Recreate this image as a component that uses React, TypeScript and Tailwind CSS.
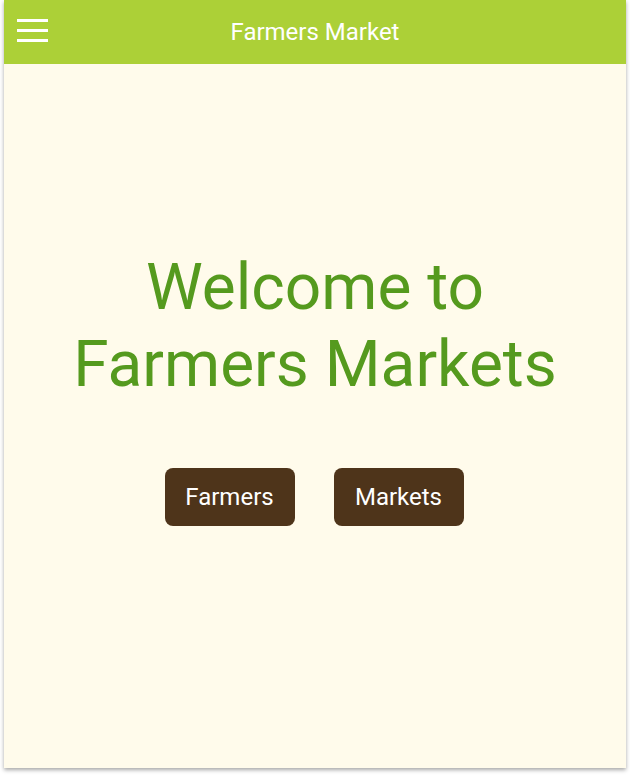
import React from 'react';

const App: React.FC = () => {
    return (
        <div className="w-full min-h-screen bg-white px-[4px] pb-[8px]" style={{ fontFamily: 'Roboto, "Noto Sans", sans-serif' }}>
            <div className="flex flex-col h-[768px] bg-[#fffbeb] shadow-[0_2px_4px_rgba(0,0,0,0.35)]">
                {/* Top bar */}
                <header className="relative flex items-center justify-center h-[64px] bg-[#acd037] shrink-0">
                    <button className="absolute left-[13px] top-[19px] flex flex-col gap-[7px]" aria-label="Menu">
                        <span className="block w-[31px] h-[3px] bg-white" />
                        <span className="block w-[31px] h-[3px] bg-white" />
                        <span className="block w-[31px] h-[3px] bg-white" />
                    </button>
                    <h2 className="text-[24px] text-white leading-none">Farmers Market</h2>
                </header>

                {/* Welcome */}
                <main className="flex flex-col items-center pt-[186px]">
                    <h1 className="text-[64px] leading-[1.2] text-[#559a1e] text-center">
                        Welcome to
                        <br />
                        Farmers Markets
                    </h1>
                    <div className="flex gap-[39px] mt-[64px] pr-[2px]">
                        <button className="w-[130px] h-[58px] rounded-[8px] bg-[#4e341a] text-white text-[24px]">Farmers</button>
                        <button className="w-[130px] h-[58px] rounded-[8px] bg-[#4e341a] text-white text-[24px]">Markets</button>
                    </div>
                </main>
            </div>
        </div>
    );
};

export default App;
